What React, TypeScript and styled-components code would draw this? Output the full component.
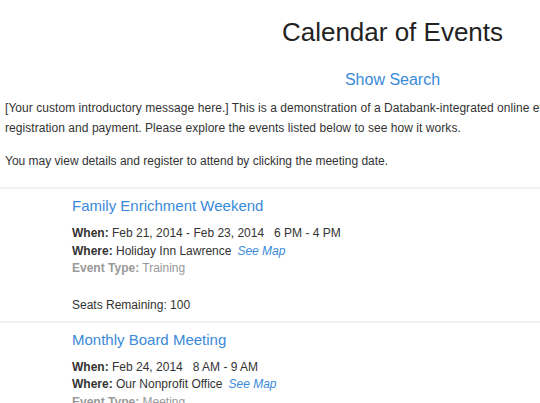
import React from 'react';
import styled, { createGlobalStyle } from 'styled-components';

const GlobalStyle = createGlobalStyle`
  body {
    margin: 0;
    background: #fff;
    font-family: "Liberation Sans", Arial, sans-serif;
    font-size: 12px;
    color: #333;
  }
`;

const Page = styled.div`
  width: 785px;
  padding: 0 5px;
  box-sizing: border-box;
`;

const Title = styled.h1`
  margin: 0;
  padding-top: 15px;
  font-size: 26px;
  font-weight: normal;
  color: #222;
  text-align: center;
  line-height: 34px;
`;

const SearchToggle = styled.a`
  display: block;
  margin-top: 21px;
  text-align: center;
  font-size: 16px;
  color: #3a8ad9;
  text-decoration: none;
  line-height: 20px;
`;

const Intro = styled.p`
  margin: 8px 0 0;
  line-height: 20px;
  white-space: nowrap;
  letter-spacing: 0.05px;
`;

const Note = styled.p`
  margin: 13px 0 0;
  line-height: 20px;
`;

const EventList = styled.div`
  margin-top: 16px;
  margin-left: -5px;
  width: 560px;
`;

const EventItem = styled.div`
  border-top: 2px solid #f2f2f2;
  padding: 5px 0 7px 72px;
`;

const EventTitle = styled.a`
  display: block;
  font-size: 15px;
  line-height: 24px;
  color: #3a8ad9;
  text-decoration: none;
  margin-bottom: 7px;
`;

const Detail = styled.div<{ $muted?: boolean }>`
  line-height: 17.5px;
  color: ${(p) => (p.$muted ? '#999' : '#333')};
  white-space: pre;
  b {
    font-weight: bold;
  }
`;

const MapLink = styled.a`
  color: #3a8ad9;
  font-style: italic;
  text-decoration: none;
  margin-left: 6px;
`;

const Seats = styled.div`
  margin-top: 18px;
  line-height: 18px;
`;

type Ev = {
  title: string;
  when: string;
  where: string;
  type: string;
  seats?: number;
};

const events: Ev[] = [
  {
    title: 'Family Enrichment Weekend',
    when: 'Feb 21, 2014 - Feb 23, 2014   6 PM - 4 PM',
    where: 'Holiday Inn Lawrence',
    type: 'Training',
    seats: 100,
  },
  {
    title: 'Monthly Board Meeting',
    when: 'Feb 24, 2014   8 AM - 9 AM',
    where: 'Our Nonprofit Office',
    type: 'Meeting',
  },
];

export default function App() {
  return (
    <>
      <GlobalStyle />
      <Page>
        <Title>Calendar of Events</Title>
        <SearchToggle href="#">Show Search</SearchToggle>
        <Intro>
          [Your custom introductory message here.] This is a demonstration of a Databank-integrated online event
          <br />
          registration and payment. Please explore the events listed below to see how it works.
        </Intro>
        <Note>You may view details and register to attend by clicking the meeting date.</Note>
        <EventList>
          {events.map((ev) => (
            <EventItem key={ev.title}>
              <EventTitle href="#">{ev.title}</EventTitle>
              <Detail>
                <b>When:</b> {ev.when}
              </Detail>
              <Detail>
                <b>Where:</b> {ev.where}
                <MapLink href="#">See Map</MapLink>
              </Detail>
              <Detail $muted>
                <b>Event Type:</b> {ev.type}
              </Detail>
              {ev.seats !== undefined && <Seats>Seats Remaining: {ev.seats}</Seats>}
            </EventItem>
          ))}
        </EventList>
      </Page>
    </>
  );
}
